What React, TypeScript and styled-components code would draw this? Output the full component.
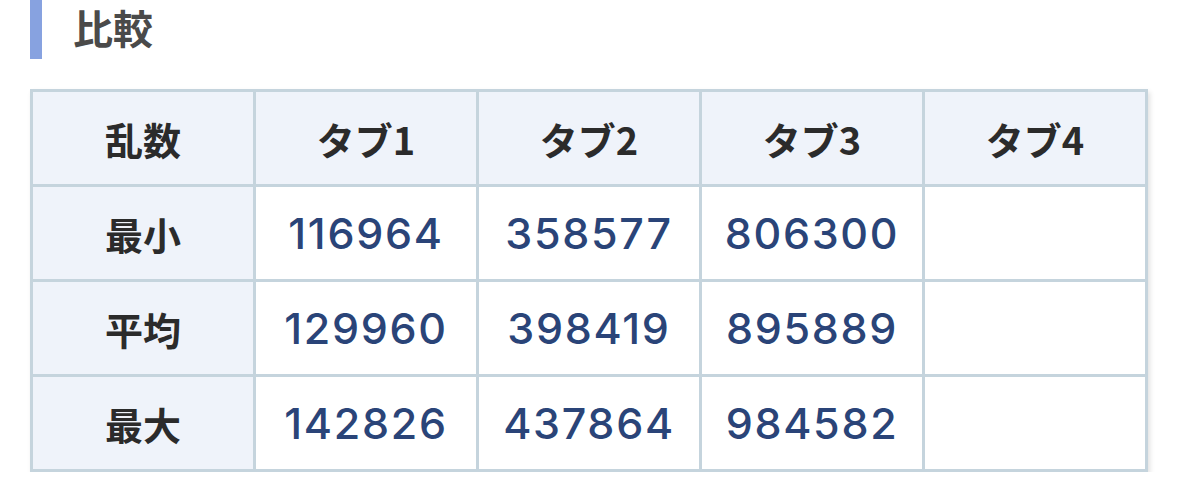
import React from "react";
import styled, { createGlobalStyle } from "styled-components";

const GlobalStyle = createGlobalStyle`
  html, body {
    margin: 0;
    padding: 0;
    background: #fff;
  }
  body {
    font-family: "Inter", "Noto Sans CJK JP", sans-serif;
  }
`;

const Page = styled.div`
  padding: 0 31px 0 30px;
`;

const Heading = styled.h2`
  margin: 0;
  height: 59px;
  border-left: 12px solid #87a2e0;
  padding-left: 31px;
  display: flex;
  align-items: center;
  padding-bottom: 5px;
  box-sizing: border-box;
  line-height: 1;
  font-family: "Noto Sans CJK JP", sans-serif;
  font-size: 40px;
  font-weight: 700;
  color: #4a4a4a;
`;

const Table = styled.table`
  margin-top: 30px;
  width: 1118px;
  border-collapse: collapse;
  table-layout: fixed;
  box-shadow: 2px 3px 5px rgba(0, 0, 0, 0.12);
`;

const Cell = styled.td<{ $head?: boolean }>`
  border: 3px solid #c5d4dd;
  height: 92px;
  padding: 0;
  text-align: center;
  vertical-align: middle;
  background: ${(p) => (p.$head ? "#eff3fa" : "#fff")};
  color: ${(p) => (p.$head ? "#2b2b2b" : "#2a4478")};
  font-family: ${(p) =>
    p.$head
      ? `"Noto Sans CJK JP", sans-serif`
      : `"Inter", "Noto Sans CJK JP", sans-serif`};
  font-size: ${(p) => (p.$head ? "38px" : "43px")};
  font-weight: ${(p) => (p.$head ? 600 : 500)};
  letter-spacing: ${(p) => (p.$head ? "0" : "1.7px")};
`;

const headers = ["乱数", "タブ1", "タブ2", "タブ3", "タブ4"];
const rows = [
  { label: "最小", values: ["116964", "358577", "806300", ""] },
  { label: "平均", values: ["129960", "398419", "895889", ""] },
  { label: "最大", values: ["142826", "437864", "984582", ""] },
];

export default function App() {
  return (
    <Page>
      <GlobalStyle />
      <Heading>比較</Heading>
      <Table>
        <thead>
          <tr>
            {headers.map((h) => (
              <Cell as="th" $head key={h}>
                {h}
              </Cell>
            ))}
          </tr>
        </thead>
        <tbody>
          {rows.map((r) => (
            <tr key={r.label}>
              <Cell $head>{r.label}</Cell>
              {r.values.map((v, i) => (
                <Cell key={i}>{v}</Cell>
              ))}
            </tr>
          ))}
        </tbody>
      </Table>
    </Page>
  );
}
